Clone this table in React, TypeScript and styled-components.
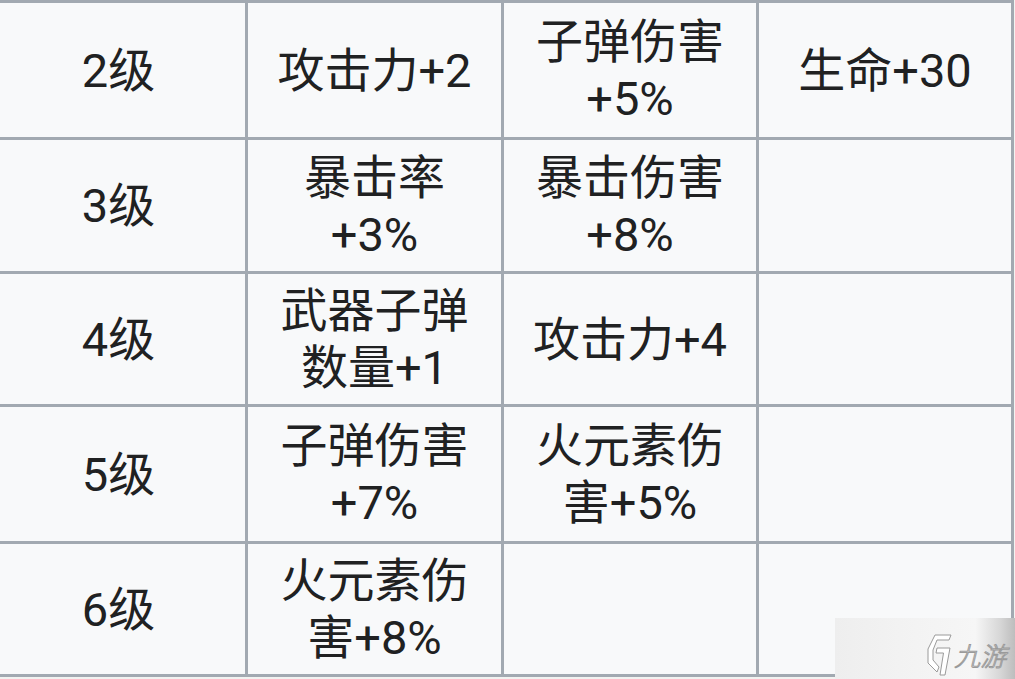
import React from "react";
import styled, { createGlobalStyle } from "styled-components";

const Global = createGlobalStyle`
  html, body { margin: 0; padding: 0; background: #f2f3f1; }
  body { font-family: Roboto, "Noto Sans CJK SC", sans-serif; }
`;

const Page = styled.div`
  position: relative;
  width: 1015px;
  height: 679px;
  overflow: hidden;
  background: #f2f3f1;
`;

const Table = styled.div`
  display: grid;
  grid-template-columns: 253px 253px 252px 252px;
  grid-template-rows: 134px 131px 130px 134px 130px;
  gap: 3px;
  padding: 3px;
  margin-left: -11px;
  width: max-content;
  background: #a2a9b1;
`;

const Cell = styled.div`
  display: flex;
  align-items: center;
  justify-content: center;
  text-align: center;
  box-sizing: border-box;
  padding: 0 19px;
  background: #f8f9fa;
  color: #202122;
  font-family: Roboto, "Noto Sans CJK SC", sans-serif;
  font-size: 47px;
  line-height: 57px;
  font-weight: 400;
`;

const Watermark = styled.div`
  position: absolute;
  right: 0;
  bottom: 0;
  width: 180px;
  height: 61px;
  display: flex;
  align-items: flex-end;
  justify-content: flex-end;
  gap: 5px;
  padding: 0 6px 2px 0;
  box-sizing: border-box;
  background: linear-gradient(
    to right,
    #eeeeee 0%,
    #f3f3f3 45%,
    #f6f6f6 78%,
    #d6d6d6 92%,
    #bdbdbd 100%
  );
`;

const LogoMark = styled.svg`
  width: 26px;
  height: 44px;
  flex: none;
`;

const LogoText = styled.span`
  display: inline-block;
  margin-bottom: 9px;
  font-family: "Noto Sans CJK SC", sans-serif;
  font-size: 26px;
  font-weight: 300;
  line-height: 1;
  color: #ffffff;
  -webkit-text-stroke: 1px #9a9a9a;
  transform: skewX(-14deg);
  white-space: nowrap;
`;

const rows: string[][] = [
  ["2级", "攻击力+2", "子弹伤害+5%", "生命+30"],
  ["3级", "暴击率+3%", "暴击伤害+8%", ""],
  ["4级", "武器子弹数量+1", "攻击力+4", ""],
  ["5级", "子弹伤害+7%", "火元素伤害+5%", ""],
  ["6级", "火元素伤害+8%", "", ""],
];

export default function App() {
  return (
    <Page>
      <Global />
      <Table>
        {rows.map((r, i) =>
          r.map((c, j) => <Cell key={`${i}-${j}`}>{c}</Cell>)
        )}
      </Table>
      <Watermark>
        <LogoMark viewBox="0 0 26 44">
          <path
            d="M9 2 L25 2 L23 7 L11 7 L7 17 L7 27 L13 34 L11 39 L2 30 L2 16 Z"
            fill="#ffffff"
            stroke="#9a9a9a"
            strokeWidth="1"
            strokeLinejoin="round"
          />
          <path
            d="M11 15 L24 15 L19 42 L14 42 L17.5 20 L10 20 Z"
            fill="#ffffff"
            stroke="#9a9a9a"
            strokeWidth="1"
            strokeLinejoin="round"
          />
        </LogoMark>
        <LogoText>九游</LogoText>
      </Watermark>
    </Page>
  );
}
